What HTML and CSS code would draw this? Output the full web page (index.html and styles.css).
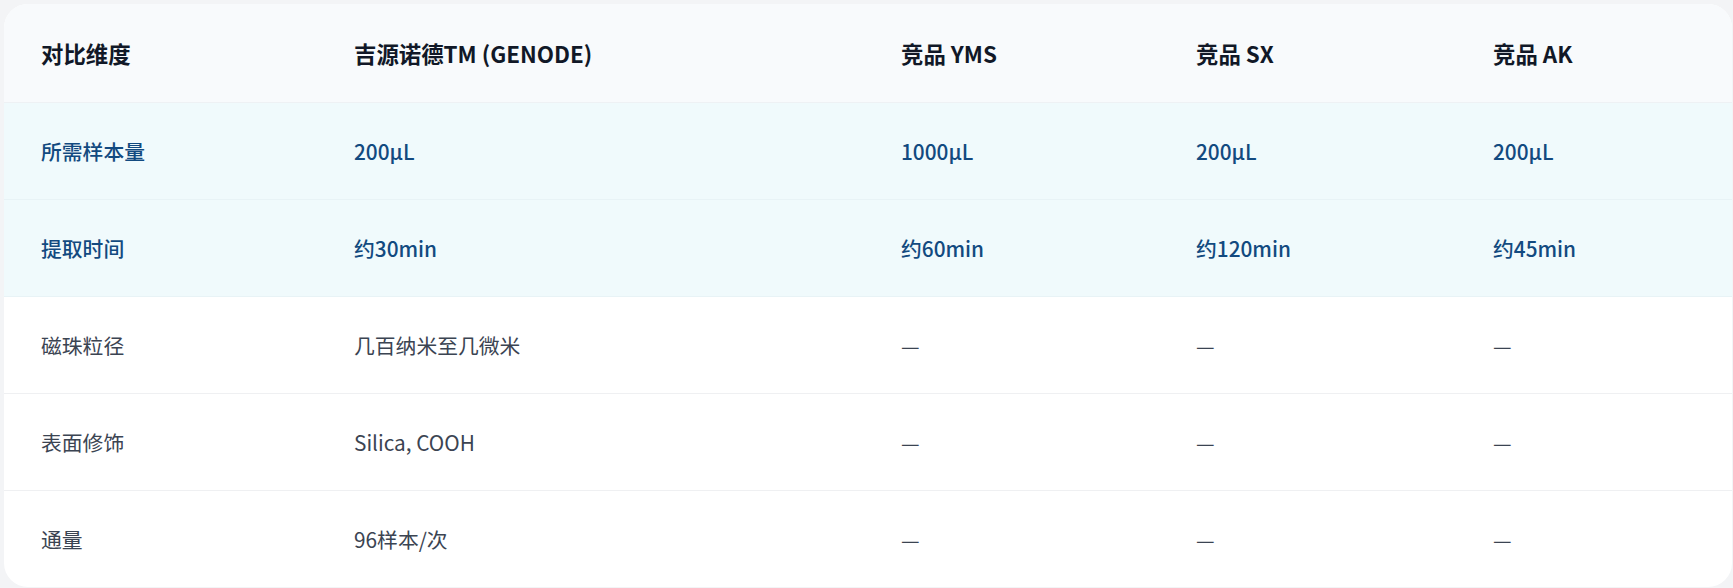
FILE: index.html
```html
<!DOCTYPE html>
<html lang="zh-CN">
<head>
    <meta charset="UTF-8">
    <meta name="viewport" content="width=device-width, initial-scale=1.0">
    <title>产品对比 - 吉源诺德</title>
    <link rel="stylesheet" href="styles.css">
</head>
<body>

<!-- 产品对比表 -->
<div class="page">
    <div class="card">
        <table class="compare">
            <colgroup>
                <col class="col-dim">
                <col class="col-ours">
                <col class="col-yms">
                <col class="col-sx">
                <col class="col-ak">
            </colgroup>
            <thead>
                <tr>
                    <th>对比维度</th>
                    <th>吉源诺德TM (GENODE)</th>
                    <th>竞品 YMS</th>
                    <th>竞品 SX</th>
                    <th>竞品 AK</th>
                </tr>
            </thead>
            <tbody>
                <tr class="highlight">
                    <td>所需样本量</td>
                    <td>200μL</td>
                    <td>1000μL</td>
                    <td>200μL</td>
                    <td>200μL</td>
                </tr>
                <tr class="highlight">
                    <td>提取时间</td>
                    <td>约30min</td>
                    <td>约60min</td>
                    <td>约120min</td>
                    <td>约45min</td>
                </tr>
                <tr>
                    <td>磁珠粒径</td>
                    <td>几百纳米至几微米</td>
                    <td>—</td>
                    <td>—</td>
                    <td>—</td>
                </tr>
                <tr>
                    <td>表面修饰</td>
                    <td>Silica, COOH</td>
                    <td>—</td>
                    <td>—</td>
                    <td>—</td>
                </tr>
                <tr>
                    <td>通量</td>
                    <td>96样本/次</td>
                    <td>—</td>
                    <td>—</td>
                    <td>—</td>
                </tr>
            </tbody>
        </table>
    </div>
</div>

</body>
</html>
```

FILE: styles.css
```css
body {
    font-family: "Noto Sans CJK SC", "Noto Sans", sans-serif;
    background-color: #f3f4f6;
    margin: 0;
    padding: 0;
}

.page {
    padding: 4px 1px 4px 4px;
}

.card {
    background-color: #ffffff;
    border-radius: 24px;
    overflow: hidden;
}

.compare {
    width: 100%;
    border-collapse: collapse;
    table-layout: fixed;
    text-align: left;
}

.col-dim { width: 313px; }
.col-ours { width: 547px; }
.col-yms { width: 295px; }
.col-sx { width: 297px; }
.col-ak { width: 276px; }

.compare th {
    height: 98px;
    padding: 0 0 0 37px;
    background-color: #f8fafc;
    color: #111827;
    font-size: 22.4px;
    font-weight: 700;
    border-bottom: 1px solid #eef1f4;
}

.compare td {
    height: 96px;
    padding: 0 0 0 37px;
    color: #3b4452;
    font-size: 20.8px;
    border-bottom: 1px solid #eff0f2;
}

.compare tbody tr:last-child td {
    border-bottom: none;
}

.highlight td {
    background-color: #f0fafc;
    color: #124a80;
    font-weight: 500;
    border-bottom-color: #e8f3f6;
}
```
